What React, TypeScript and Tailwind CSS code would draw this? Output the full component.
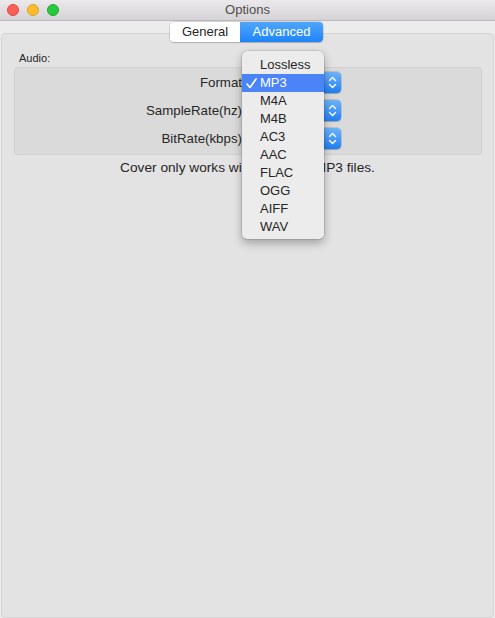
import React from "react";

const font = { fontFamily: '"Liberation Sans", Arial, sans-serif' };

function Stepper() {
  return (
    <div className="w-[17px] h-[21px] rounded-r-[4px] bg-gradient-to-b from-[#6cb3fa] to-[#1a7ff5] flex items-center justify-center">
      <svg width="9" height="13" viewBox="0 0 9 13" fill="none" stroke="white" strokeWidth="1.4" strokeLinecap="round" strokeLinejoin="round">
        <path d="M1.5 4.5 L4.5 1.5 L7.5 4.5" />
        <path d="M1.5 8.5 L4.5 11.5 L7.5 8.5" />
      </svg>
    </div>
  );
}

function Row({ label, value }: { label: string; value: string }) {
  return (
    <div className="flex items-center h-[21px]">
      <div className="w-[229px] text-right text-[13.3px] text-[#262626] pr-[2px] whitespace-nowrap">{label}</div>
      <div className="flex h-[21px] w-[97px] rounded-[4px] bg-white shadow-[0_0_0_0.5px_rgba(0,0,0,0.25),0_1px_1px_rgba(0,0,0,0.15)]">
        <div className="flex-1 pl-2 text-[13px] leading-[21px] text-[#262626]">{value}</div>
        <Stepper />
      </div>
    </div>
  );
}

export default function App() {
  const items = ["Lossless", "MP3", "M4A", "M4B", "AC3", "AAC", "FLAC", "OGG", "AIFF", "WAV"];
  return (
    <div className="relative w-[495px] h-[618px] bg-[#ececec] overflow-hidden" style={font}>
      {/* title bar */}
      <div className="relative h-[21px] bg-gradient-to-b from-[#ebe9eb] to-[#d5d3d5] border-b border-[#b9b7b9] flex items-center justify-center">
        <div className="absolute left-[7px] top-[4px] flex gap-[8px]">
          <div className="w-[12px] h-[12px] rounded-full bg-[#fc5f57] border border-[#df4744]" />
          <div className="w-[12px] h-[12px] rounded-full bg-[#fdbc2e] border border-[#dea123]" />
          <div className="w-[12px] h-[12px] rounded-full bg-[#28c840] border border-[#1aab29]" />
        </div>
        <span className="text-[13px] text-[#4d4d4d]">Options</span>
      </div>

      {/* tab box */}
      <div className="mt-[12px] mx-[1px] h-[585px] rounded-[4px] bg-[#e3e3e3] border border-[#d4d4d4] pt-[17px]">
        <div className="pl-[17px] text-[11px] leading-[14px] text-[#262626]">Audio:</div>
        <div className="mt-[2px] ml-[12px] mr-[11px] rounded-[4px] bg-[#dadada] border border-[#d0d0d0] pt-[4px] pb-[5px] flex flex-col gap-[7px]">
          <Row label="Format" value="MP3" />
          <Row label="SampleRate(hz)" value="44100" />
          <Row label="BitRate(kbps)" value="320" />
        </div>
        <div className="mt-[5px] text-center text-[13.7px] leading-[16px] text-[#262626] whitespace-nowrap">
          Cover only works with M4A and MP3 files.
        </div>
      </div>

      {/* segmented control */}
      <div className="absolute left-[170px] top-[22px] flex h-[20px] rounded-[4px] shadow-[0_0_0_0.5px_rgba(0,0,0,0.2),0_1px_1px_rgba(0,0,0,0.15)] overflow-hidden text-[13px]">
        <div className="w-[70px] bg-white text-[#262626] flex items-center justify-center">General</div>
        <div className="w-[83px] bg-gradient-to-b from-[#4ea6fc] to-[#1c84fb] text-white flex items-center justify-center">Advanced</div>
      </div>

      {/* popup menu */}
      <div className="absolute left-[242px] top-[51px] w-[82px] rounded-[5px] bg-[#ececec] pt-[5px] pb-[3px] shadow-[0_0_0_0.5px_rgba(0,0,0,0.2),0_4px_10px_rgba(0,0,0,0.3)]">
        {items.map((it) => {
          const sel = it === "MP3";
          return (
            <div
              key={it}
              className={
                sel
                  ? "relative h-[18px] bg-[#4a84f6] text-white text-[13px] leading-[18px] pl-[18px]"
                  : "relative h-[18px] text-[#262626] text-[13px] leading-[18px] pl-[18px]"
              }
            >
              {sel && (
                <svg className="absolute left-[4px] top-[4px]" width="11" height="11" viewBox="0 0 11 11" fill="none" stroke="white" strokeWidth="1.6" strokeLinecap="round" strokeLinejoin="round">
                  <path d="M1 6 L4 9.5 L10 1" />
                </svg>
              )}
              {it}
            </div>
          );
        })}
      </div>
    </div>
  );
}
